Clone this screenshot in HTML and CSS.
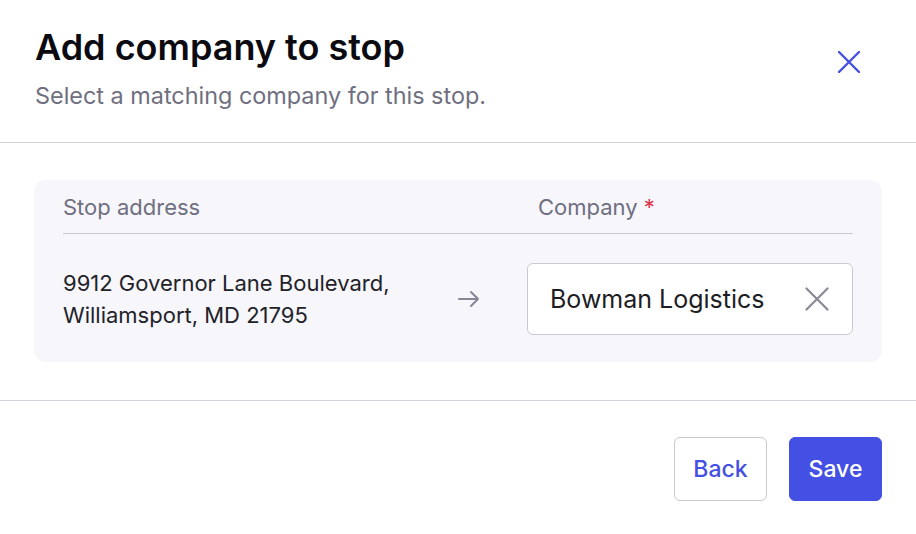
FILE: index.html
```html
<!DOCTYPE html>
<html lang="en">
<head>
<meta charset="utf-8">
<title>Add company to stop</title>
<link rel="stylesheet" href="styles.css">
</head>
<body>
<div class="dialog">
  <header class="dialog-header">
    <div class="titles">
      <h1 class="title">Add company to stop</h1>
      <p class="subtitle">Select a matching company for this stop.</p>
    </div>
    <button class="close" aria-label="Close">
      <svg width="22" height="22" viewBox="0 0 22 22"><path d="M1 1L21 21M21 1L1 21" stroke="#4450e3" stroke-width="2.4" stroke-linecap="round" fill="none"/></svg>
    </button>
  </header>
  <section class="dialog-body">
    <div class="card">
      <div class="card-head">
        <div class="col-addr">Stop address</div>
        <div class="col-company">Company <span class="req">*</span></div>
      </div>
      <div class="card-row">
        <div class="address">9912 Governor Lane Boulevard,<br>Williamsport, MD 21795</div>
        <div class="arrow">
          <svg width="24" height="20" viewBox="0 0 24 20"><path d="M2 10H21M14 3L21 10L14 17" stroke="#868696" stroke-width="2" stroke-linecap="round" stroke-linejoin="round" fill="none"/></svg>
        </div>
        <div class="input">
          <span class="input-text">Bowman Logistics</span>
          <svg class="clear" width="24" height="24" viewBox="0 0 24 24"><path d="M1.5 1.5L22.5 22.5M22.5 1.5L1.5 22.5" stroke="#8a8a96" stroke-width="2.2" stroke-linecap="round" fill="none"/></svg>
        </div>
      </div>
    </div>
  </section>
  <footer class="dialog-footer">
    <button class="btn btn-secondary">Back</button>
    <button class="btn btn-primary">Save</button>
  </footer>
</div>
</body>
</html>
```
FILE: styles.css
```css
* { box-sizing: border-box; }
html, body { margin: 0; padding: 0; background: #fff; }
body { font-family: Inter, "Noto Sans", sans-serif; color: #1f1f27; }

.dialog { width: 916px; }

.dialog-header {
  display: flex;
  justify-content: space-between;
  align-items: flex-start;
  padding: 26px 56px 31px 35px;
  border-bottom: 1px solid #d3d3de;
}
.title {
  margin: 0;
  font-size: 36px;
  line-height: 42px;
  font-weight: 600;
  color: #0a0a10;
}
.subtitle {
  margin: 13px 0 0;
  font-size: 23.4px;
  line-height: 30px;
  color: #6f6f80;
}
.close {
  margin-top: 25px;
  padding: 0;
  border: 0;
  background: none;
  width: 22px;
  height: 22px;
  display: flex;
}

.dialog-body {
  padding: 37px 34px 38px 34px;
  border-bottom: 1px solid #d3d3de;
}
.card {
  background: #f6f6fb;
  border-radius: 12px;
  padding: 0 29px 27px;
}
.card-head {
  display: flex;
  padding: 13px 0 12px;
  border-bottom: 1px solid #c9c9d4;
  font-size: 22px;
  line-height: 28px;
  color: #6f6f80;
}
.col-addr { flex: 1; }
.col-company { width: 326px; padding-left: 11px; }
.req { color: #e0334b; }

.card-row {
  display: flex;
  align-items: center;
  padding-top: 29px;
}
.address {
  flex: 1;
  font-size: 22px;
  line-height: 32px;
  color: #222229;
}
.arrow {
  width: 24px;
  margin-right: 46px;
  display: flex;
}
.input {
  width: 326px;
  height: 72px;
  background: #fff;
  border: 1px solid #c9c9d4;
  border-radius: 6px;
  display: flex;
  align-items: center;
  justify-content: space-between;
  padding: 0 23px 0 22px;
}
.input-text {
  font-size: 25px;
  color: #1d1d24;
}
.clear { display: block; }

.dialog-footer {
  display: flex;
  justify-content: flex-end;
  gap: 22px;
  padding: 36px 34px 33px;
}
.btn {
  height: 64px;
  width: 93px;
  border-radius: 6px;
  font-family: Inter, "Noto Sans", sans-serif;
  font-size: 23px;
  font-weight: 500;
  cursor: pointer;
}
.btn-secondary {
  background: #fff;
  border: 1px solid #c9c9d4;
  color: #4450e3;
}
.btn-primary {
  background: #4450e3;
  border: 1px solid #4450e3;
  color: #fff;
}
```
